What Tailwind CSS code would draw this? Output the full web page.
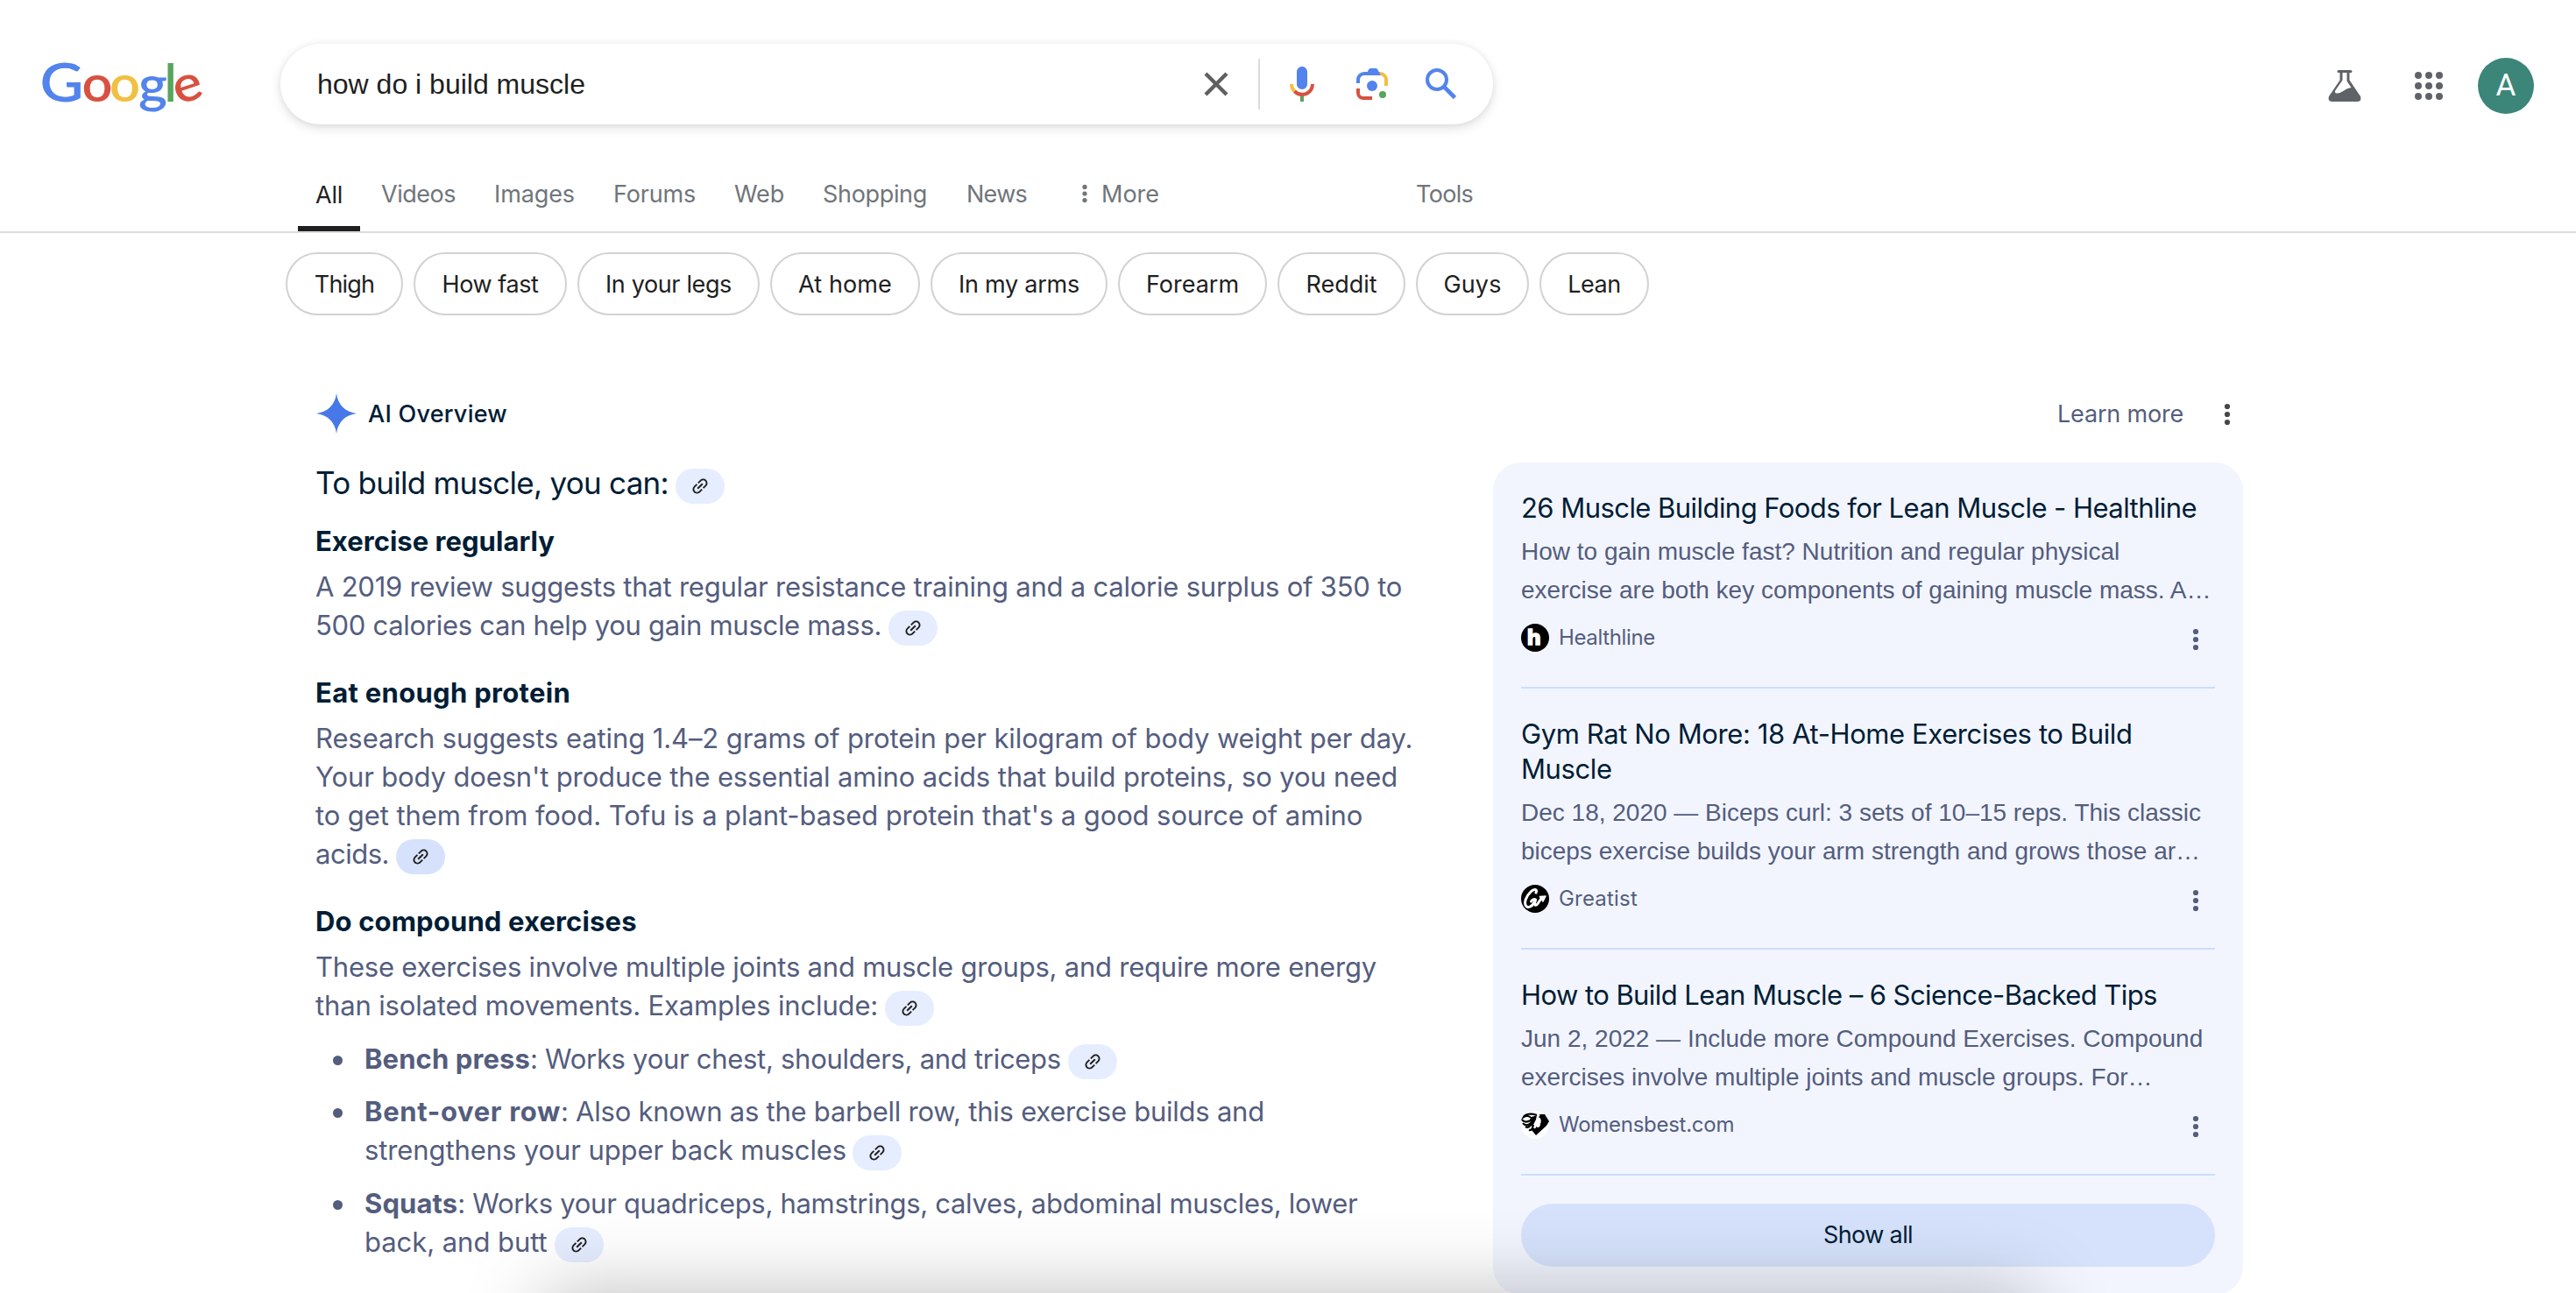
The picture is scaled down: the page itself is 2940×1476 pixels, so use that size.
<!DOCTYPE html>
<html lang="en">
<head>
  <meta charset="UTF-8">
  <meta name="viewport" content="width=device-width, initial-scale=1.0">
  <title>how do i build muscle - Google Search</title>
  <script src="https://cdn.jsdelivr.net/npm/@tailwindcss/browser@4"></script>
</head>
<body class="relative h-[1476px] overflow-hidden bg-white font-[Inter,'Liberation_Sans',sans-serif] text-[#1f1f1f]">

  <!-- Shared icons -->
  <svg class="hidden">
    <symbol id="link" viewBox="0 0 24 24">
      <path transform="rotate(-45 12 12)" d="M3.9 12c0-1.71 1.39-3.1 3.1-3.1h4V7H7c-2.76 0-5 2.24-5 5s2.24 5 5 5h4v-1.9H7c-1.71 0-3.1-1.39-3.1-3.1zM8 13h8v-2H8v2zm9-6h-4v1.9h4c1.71 0 3.1 1.39 3.1 3.1s-1.39 3.1-3.1 3.1h-4V17h4c2.76 0 5-2.24 5-5s-2.24-5-5-5z"/>
    </symbol>
    <symbol id="dots" viewBox="0 0 8 26">
      <circle cx="4" cy="4" r="3.1"/><circle cx="4" cy="13" r="3.1"/><circle cx="4" cy="22" r="3.1"/>
    </symbol>
  </svg>

  <!-- Header -->
  <header class="h-[266px] border-b-2 border-[#dadce0]">
    <div class="flex h-[142px] items-start">
      <a href="#" class="ml-10 mt-[50px] w-[280px]" aria-label="Google">
        <svg width="200" height="90" viewBox="40 50 200 90" font-family="Lato, sans-serif" font-weight="600">
          <text x="45.5" y="115.5" font-size="62" fill="#5383ec" textLength="50" lengthAdjust="spacingAndGlyphs">G</text>
          <text x="93.5" y="115.5" font-size="57" fill="#d85140" textLength="35" lengthAdjust="spacingAndGlyphs">o</text>
          <text x="125" y="115.5" font-size="57" fill="#f1bf42" textLength="35" lengthAdjust="spacingAndGlyphs">o</text>
          <text x="158" y="116.5" font-size="57" fill="#5383ec" textLength="33" lengthAdjust="spacingAndGlyphs">g</text>
          <text x="187.500" y="115.5" font-size="59" fill="#58a55c">l</text>
          <text x="198" y="115.5" font-size="57" fill="#d85140" textLength="33" lengthAdjust="spacingAndGlyphs" transform="rotate(-18 214 101)">e</text>
        </svg>
      </a>

      <!-- Search box -->
      <div class="mt-[50px] flex h-[92px] w-[1384px] items-center rounded-full bg-white pl-[42px] pr-9 shadow-[0_4px_12px_rgba(60,64,67,0.17),0_0_6px_rgba(60,64,67,0.06)]">
        <span class="flex-1 whitespace-pre font-['Liberation_Sans',Arial,sans-serif] text-[32px] leading-[44px]">how do i build muscle</span>
        <svg class="size-12" viewBox="0 0 48 48" stroke="#5f5f5f" stroke-width="4.4"><path d="M12 12l24 24M36 12L12 36"/></svg>
        <div class="mx-6 h-[58px] w-0.5 bg-[#dadce0]"></div>
        <svg class="size-12" viewBox="0 0 24 24">
          <path fill="#5383ec" d="m12 15c1.66 0 3-1.31 3-2.97v-7.02c0-1.66-1.34-3.01-3-3.01s-3 1.34-3 3.01v7.02c0 1.66 1.34 2.97 3 2.97z"/>
          <path fill="#58a55c" d="m11 18.08h2v3.92h-2z"/>
          <path fill="#f1bf42" d="m7.05 16.87c-1.27-1.33-2.05-2.83-2.05-4.87h2c0 1.45 0.56 2.42 1.47 3.38v0.32l-1.15 1.18z"/>
          <path fill="#d85140" d="m12 16.93a4.97 5.25 0 0 1 -3.54 -1.55l-1.41 1.49c1.26 1.34 3.02 2.13 4.95 2.13 3.87 0 6.99-2.92 6.99-7h-1.99c0 2.92-2.24 4.93-5 4.93z"/>
        </svg>
        <svg class="ml-8 size-12" viewBox="0 0 48 48" fill="none" stroke-width="4">
          <path stroke="#f1bf42" d="M30 12h3a7 7 0 0 1 7 7v7"/>
          <path stroke="#5383ec" d="M8 23v-4a7 7 0 0 1 7-7h14"/>
          <path fill="#5383ec" d="M17 14l3-6.500q.7-1.500 2-1.500h6q1.500 0 2.200 1.300L34 14z"/>
          <path stroke="#d85140" d="M8 29v5a6 6 0 0 0 6 6h10"/>
          <circle cx="24" cy="26" r="6" fill="#5383ec"/>
          <circle cx="36" cy="36" r="4" fill="#58a55c"/>
        </svg>
        <svg class="ml-[30px] size-12" viewBox="0 0 48 48" fill="none" stroke="#5383ec">
          <circle cx="20" cy="19" r="11" stroke-width="4"/><path stroke-width="4.600" d="M28 27l12.500 12.500"/>
        </svg>
      </div>

      <div class="ml-auto mr-12 mt-[66px] flex h-16 items-center">
        <svg class="size-12" viewBox="0 0 48 48">
          <path fill="#5f6368" d="M17 6h14a1.500 1.500 0 0 1 0 3h-1.500v8.500L42 36q2 5.500-3.500 6h-29Q4 41.500 6 36l12.500-18.500V9H17a1.500 1.500 0 0 1 0-3z"/>
          <path fill="#fff" d="M21.500 9h5v9.500l5 7.500c-7 .5-10 6.500-16 6.500-3 0-3-2-2-3.500l8-11.500z"/>
        </svg>
        <svg class="ml-12 size-12" viewBox="0 0 48 48" fill="#5f6368">
          <circle cx="12" cy="12" r="4"/><circle cx="24" cy="12" r="4"/><circle cx="36" cy="12" r="4"/>
          <circle cx="12" cy="24" r="4"/><circle cx="24" cy="24" r="4"/><circle cx="36" cy="24" r="4"/>
          <circle cx="12" cy="36" r="4"/><circle cx="24" cy="36" r="4"/><circle cx="36" cy="36" r="4"/>
        </svg>
        <div class="ml-8 flex size-16 items-center justify-center rounded-full bg-[#3b8679] font-[Roboto,sans-serif] text-[35px] text-white">A</div>
      </div>
    </div>

    <!-- Tabs -->
    <nav class="flex h-[122px] items-start whitespace-nowrap pl-[340px] text-[27px] leading-9 text-[#70757a]">
      <a href="#" class="mr-[24px] flex h-[122px] w-[71px] justify-center border-b-[6px] border-[#1f1f1f] pt-[63px] tracking-[-0.24px] text-[#1f1f1f]">All</a>
      <div class="flex gap-[44px] pt-[62px]">
        <a href="#" class="w-[85px] tracking-[-0.48px]">Videos</a>
        <a href="#" class="w-[92px] tracking-[-0.1px]">Images</a>
        <a href="#" class="w-[94px] tracking-[-0.18px]">Forums</a>
        <a href="#" class="w-[57px] tracking-[-0.17px]">Web</a>
        <a href="#" class="w-[120px] tracking-[-0.33px]">Shopping</a>
        <a href="#" class="w-[69px] tracking-[-0.73px]">News</a>
      </div>
      <a href="#" class="ml-[62px] flex pt-[62px]">
        <svg class="mr-[15px] mt-[6px] h-[22px] w-2" viewBox="0 0 8 26" fill="#70757a"><use href="#dots"/></svg>More
      </a>
      <a href="#" class="ml-[293px] pt-[62px] tracking-[-0.7px]">Tools</a>
    </nav>
  </header>

  <!-- Refinement chips -->
  <div class="mt-[22px] flex gap-3 pl-[326px] text-[27px] leading-9 *:flex *:h-[72px] *:items-center *:justify-center *:whitespace-nowrap *:rounded-full *:border-2 *:border-[#d2d2d2] *:pt-0.5">
    <a href="#" class="w-[134px] tracking-[-0.8px]">Thigh</a>
    <a href="#" class="w-[175px] tracking-[-0.41px]">How fast</a>
    <a href="#" class="w-[208px] tracking-[-0.37px]">In your legs</a>
    <a href="#" class="w-[171px] tracking-[0.13px]">At home</a>
    <a href="#" class="w-[202px] tracking-[-0.25px]">In my arms</a>
    <a href="#" class="w-[170px]">Forearm</a>
    <a href="#" class="w-[146px]">Reddit</a>
    <a href="#" class="w-[129px] tracking-[0.12px]">Guys</a>
    <a href="#" class="w-[125px] tracking-[-0.5px]">Lean</a>
  </div>

  <!-- AI Overview -->
  <main class="ml-[360px] mt-[89px] w-[2200px]">
    <div class="flex h-[46px] items-center text-[27px] leading-9">
      <svg class="ml-px size-[46px]" viewBox="0 0 46 46" fill="#4678e8"><path d="M23 0C24.500 13 33 21.500 46 23 33 24.500 24.500 33 23 46 21.500 33 13 24.500 0 23 13 21.500 21.500 13 23 0z"/></svg>
      <h1 class="ml-[13px] pt-px font-medium tracking-[0.25px] text-[#001d35]">AI Overview</h1>
      <a href="#" class="ml-auto pt-px tracking-[-0.19px] text-[#545d7e]">Learn more</a>
      <svg class="ml-[46px] mr-[14px] mt-0.5 h-[26px] w-2" fill="#474747"><use href="#dots"/></svg>
    </div>

    <div class="mt-8 flex items-start justify-between">
      <section class="w-[1280px] whitespace-nowrap text-[31px] leading-[44px] text-[#545d7e]">
        <div class="flex h-12 text-[35px] leading-[48px] tracking-[-0.72px] text-[#001d35]">To build muscle, you can:
          <span class="ml-2 mt-2 flex h-10 w-14 items-center justify-center rounded-full bg-[#e5edff]"><svg class="size-6" fill="#1f1f1f"><use href="#link"/></svg></span>
        </div>

        <h2 class="mt-[21px] font-bold tracking-[0.03px] text-[#001d35]">Exercise regularly</h2>
        <div class="mt-2">
          <p class="tracking-[-0.22px]">A 2019 review suggests that regular resistance training and a calorie surplus of 350 to</p>
          <p class="flex h-11 tracking-[-0.29px]">500 calories can help you gain muscle mass.
            <span class="ml-2 mt-[5px] flex h-10 w-14 items-center justify-center rounded-full bg-[#e5edff]"><svg class="size-6" fill="#1f1f1f"><use href="#link"/></svg></span>
          </p>
        </div>

        <h2 class="mt-[33px] font-bold tracking-[0.31px] text-[#001d35]">Eat enough protein</h2>
        <div class="mt-2">
          <p class="tracking-[-0.1px]">Research suggests eating 1.4–2 grams of protein per kilogram of body weight per day.</p>
          <p class="tracking-[-0.14px]">Your body doesn't produce the essential amino acids that build proteins, so you need</p>
          <p class="tracking-[-0.1px]">to get them from food. Tofu is a plant-based protein that's a good source of amino</p>
          <p class="flex h-11 tracking-[-0.48px]">acids.
            <span class="ml-2 mt-[5px] flex h-10 w-14 items-center justify-center rounded-full bg-[#d6e2fb]"><svg class="size-6" fill="#1f1f1f"><use href="#link"/></svg></span>
          </p>
        </div>

        <h2 class="mt-[33px] font-bold tracking-[0.14px] text-[#001d35]">Do compound exercises</h2>
        <div class="mt-2">
          <p class="tracking-[-0.22px]">These exercises involve multiple joints and muscle groups, and require more energy</p>
          <p class="flex h-11 tracking-[-0.15px]">than isolated movements. Examples include:
            <span class="ml-2 mt-[5px] flex h-10 w-14 items-center justify-center rounded-full bg-[#e5edff]"><svg class="size-6" fill="#1f1f1f"><use href="#link"/></svg></span>
          </p>
        </div>

        <ul class="mt-[17px]">
          <li class="flex">
            <span class="ml-5 mr-[25px] mt-[18px] size-[11px] rounded-full bg-[#545d7e]"></span>
            <p class="flex h-11"><b class="tracking-[0.11px]">Bench press</b><span class="tracking-[-0.29px]">: Works your chest, shoulders, and triceps</span>
              <span class="ml-2 mt-[5px] flex h-10 w-14 items-center justify-center rounded-full bg-[#e5edff]"><svg class="size-6" fill="#1f1f1f"><use href="#link"/></svg></span>
            </p>
          </li>
          <li class="mt-4 flex">
            <span class="ml-5 mr-[25px] mt-[18px] size-[11px] rounded-full bg-[#545d7e]"></span>
            <div>
              <p><b class="tracking-[0.66px]">Bent-over row</b><span class="tracking-[-0.24px]">: Also known as the barbell row, this exercise builds and</span></p>
              <p class="flex h-11 tracking-[-0.1px]">strengthens your upper back muscles
                <span class="ml-[7px] mt-[5px] flex h-10 w-14 items-center justify-center rounded-full bg-[#e5edff]"><svg class="size-6" fill="#1f1f1f"><use href="#link"/></svg></span>
              </p>
            </div>
          </li>
          <li class="mt-[17px] flex">
            <span class="ml-5 mr-[25px] mt-[18px] size-[11px] rounded-full bg-[#545d7e]"></span>
            <div>
              <p><b class="tracking-[0.1px]">Squats</b><span class="tracking-[-0.3px]">: Works your quadriceps, hamstrings, calves, abdominal muscles, lower</span></p>
              <p class="flex h-11 tracking-[-0.05px]">back, and butt
                <span class="ml-2 mt-[5px] flex h-10 w-14 items-center justify-center rounded-full bg-[#e5edff]"><svg class="size-6" fill="#1f1f1f"><use href="#link"/></svg></span>
              </p>
            </div>
          </li>
        </ul>
      </section>

      <!-- Sources -->
      <aside class="mt-px w-[856px] whitespace-nowrap rounded-[32px] bg-[#f2f5fe] px-8 pb-8 text-[#545d7e]">
        <article class="border-b-2 border-[#cadefa] pb-10 pt-8">
          <h3 class="text-[31px] leading-10 tracking-[-0.55px] text-[#001d35]">26 Muscle Building Foods for Lean Muscle - Healthline</h3>
          <p class="mt-2 font-['Liberation_Sans',Arial,sans-serif] text-[28px] leading-[44px]">How to gain muscle fast? Nutrition and regular physical<br>exercise are both key components of gaining muscle mass. A…</p>
          <div class="mt-4 flex h-8 items-center text-[24px] leading-8">
            <svg class="mr-[11px] size-8" viewBox="0 0 32 32">
              <circle cx="16" cy="16" r="16"/>
              <text x="6.500" y="24" font-family="DejaVu Sans" font-weight="700" font-size="23" fill="#fff" stroke="#fff" stroke-width="1.500">h</text>
            </svg>
            <span class="tracking-[-0.36px]">Healthline</span>
            <svg class="ml-auto mr-[18px] mt-1 h-[26px] w-2" fill="#545d7e"><use href="#dots"/></svg>
          </div>
        </article>

        <article class="border-b-2 border-[#cadefa] pb-10 pt-8">
          <h3 class="text-[31px] leading-10 tracking-[-0.4px] text-[#001d35]">Gym Rat No More: 18 At-Home Exercises to Build<br>Muscle</h3>
          <p class="mt-2 font-['Liberation_Sans',Arial,sans-serif] text-[28px] leading-[44px]">Dec 18, 2020 — Biceps curl: 3 sets of 10–15 reps. This classic<br>biceps exercise builds your arm strength and grows those ar…</p>
          <div class="mt-4 flex h-8 items-center text-[24px] leading-8">
            <svg class="mr-[11px] size-8" viewBox="0 0 32 32" fill="none" stroke="#fff" stroke-width="3" stroke-linecap="round" stroke-linejoin="round">
              <circle cx="16" cy="16" r="16" fill="#000" stroke="none"/>
              <path d="M17 9c2-4-2-5-6-1C6 13 3 20 5.500 24c2 3 7 1 9-3l2-4c-1.500-1-4 0-5 2M16.500 18c-2 3-1 6 1 5 2.500-1 3-6 7-8.500"/>
              <path d="M21.500 13.500l6.500-.5-3 6z" fill="#fff" stroke-width="1.500"/>
            </svg>
            <span class="tracking-[0.2px]">Greatist</span>
            <svg class="ml-auto mr-[18px] mt-1 h-[26px] w-2" fill="#545d7e"><use href="#dots"/></svg>
          </div>
        </article>

        <article class="border-b-2 border-[#cadefa] pb-10 pt-8">
          <h3 class="text-[31px] leading-10 tracking-[-0.56px] text-[#001d35]">How to Build Lean Muscle – 6 Science-Backed Tips</h3>
          <p class="mt-2 font-['Liberation_Sans',Arial,sans-serif] text-[28px] leading-[44px]">Jun 2, 2022 — Include more Compound Exercises. Compound<br>exercises involve multiple joints and muscle groups. For…</p>
          <div class="mt-4 flex h-8 items-center text-[24px] leading-8">
            <svg class="mr-[11px] size-8" viewBox="0 0 32 32">
              <circle cx="16" cy="16" r="16" fill="#fff"/>
              <path d="M21 4h6l5 8-3 5-12 11-5-6 1-4c2 3 4 3 4 0 2 2 5 1 5-3 2-4 0-8-3-8 2 0 3-1 2-3z"/>
              <path fill="none" stroke="#000" stroke-width="2.200" d="M18 5C12 3 5 3 3 7c3-2 7-1 8 1M16 7c-3 0-5 2-5 5M1 10c2 3 6 3 10 1M2 14c2 3 6 3 9 0M5 18c3 2 5 0 7-3M9 22c3 1 4-2 5-6"/>
              <path d="M13 8l5-3-1 5-4 8-3-4z"/>
            </svg>
            <span class="tracking-[-0.27px]">Womensbest.com</span>
            <svg class="ml-auto mr-[18px] mt-1 h-[26px] w-2" fill="#545d7e"><use href="#dots"/></svg>
          </div>
        </article>

        <button class="mt-8 block h-[72px] w-full rounded-full bg-[#d6e2fb] text-[27px] leading-9 tracking-[-0.62px] text-[#001d35]">Show all</button>
      </aside>
    </div>
  </main>

  <!-- Soft shadow along the bottom edge -->
  <div class="pointer-events-none absolute left-[640px] top-[1496px] h-20 w-[1660px] shadow-[0_0_90px_20px_rgba(0,0,0,0.26)]"></div>
</body>
</html>
